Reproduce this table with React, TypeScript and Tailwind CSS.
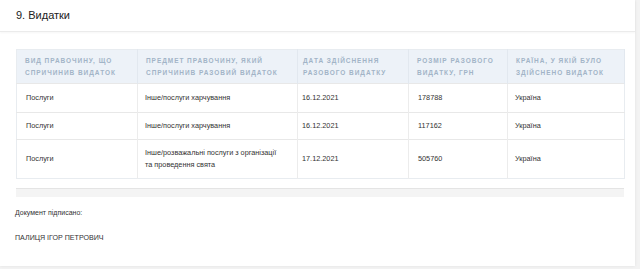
import React from "react";

const rows = [
  { a: "Послуги", b: ["Інше/послуги харчування"], c: "16.12.2021", d: "178788", e: "Україна", h: "h-[29px]" },
  { a: "Послуги", b: ["Інше/послуги харчування"], c: "16.12.2021", d: "117162", e: "Україна", h: "h-[27px]" },
  {
    a: "Послуги",
    b: ["Інше/розважальні послуги з організації", "та проведення свята"],
    c: "17.12.2021",
    d: "505760",
    e: "Україна",
    h: "h-[39px]",
  },
];

export default function App() {
  return (
    <div
      className="w-[640px] h-[269px] bg-[#f3f3f3] overflow-hidden"
      style={{ fontFamily: '"Liberation Sans", Arial, sans-serif' }}
    >
      <div className="w-[635px] h-[266px] bg-white shadow-[0_0_3px_rgba(0,0,0,0.08)] flex flex-col">
        <div className="h-[32px] flex items-center px-4 border-b border-[#ebebeb] shadow-[0_1px_2px_rgba(0,0,0,0.04)] text-[11px] text-[#222]">
          9. Видатки
        </div>
        <div className="pt-[17px] pl-4 pr-[11px]">
          <table className="table-fixed border-collapse w-[608px] border border-[#e8ecf0]">
            <colgroup>
              <col className="w-[121px]" />
              <col className="w-[160px]" />
              <col className="w-[111px]" />
              <col className="w-[99px]" />
              <col className="w-[117px]" />
            </colgroup>
            <thead>
              <tr className="h-[34px] bg-[#edf2f8]">
                {[
                  ["ВИД ПРАВОЧИНУ, ЩО", "СПРИЧИНИВ ВИДАТОК"],
                  ["ПРЕДМЕТ ПРАВОЧИНУ, ЯКИЙ", "СПРИЧИНИВ РАЗОВИЙ ВИДАТОК"],
                  ["ДАТА ЗДІЙСНЕННЯ", "РАЗОВОГО ВИДАТКУ"],
                  ["РОЗМІР РАЗОВОГО", "ВИДАТКУ, ГРН"],
                  ["КРАЇНА, У ЯКІЙ БУЛО", "ЗДІЙСНЕНО ВИДАТОК"],
                ].map((lines, i) => (
                  <th
                    key={i}
                    className={`text-left align-middle font-bold text-[6.5px] leading-[12px] tracking-[0.95px] text-[#a2b4c7] border-r border-[#e2e8ef] ${
                      i === 2 ? "pl-[5px]" : "pl-[8px]"
                    } pr-1`}
                  >
                    {lines.map((l, j) => (
                      <div key={j} className="whitespace-nowrap">{l}</div>
                    ))}
                  </th>
                ))}
              </tr>
            </thead>
            <tbody>
              {rows.map((r, i) => (
                <tr key={i} className={`${r.h} border-t border-[#e8e8e8]`}>
                  <td className="pl-[9px] align-middle text-[7.3px] text-[#333] border-r border-[#ececec]">{r.a}</td>
                  <td className="pl-[7px] align-middle text-[7.3px] leading-[12px] text-[#333] border-r border-[#ececec]">
                    {r.b.map((l, j) => (
                      <div key={j} className="whitespace-nowrap">{l}</div>
                    ))}
                  </td>
                  <td className="pl-[4px] align-middle text-[7.3px] text-[#333] border-r border-[#ececec]">{r.c}</td>
                  <td className="pl-[9px] align-middle text-[7.3px] text-[#333] border-r border-[#ececec]">{r.d}</td>
                  <td className="pl-[7px] align-middle text-[7.3px] text-[#333]">{r.e}</td>
                </tr>
              ))}
            </tbody>
          </table>
          <div className="mt-[9px] w-[608px] h-[9px] bg-[#f4f4f4] border-t border-[#e4e4e4]" />
        </div>
        <div className="pl-[15px] mt-[11px] text-[7px] leading-[10px] text-[#333]">Документ підписано:</div>
        <div className="pl-[15px] mt-[15px] text-[7.1px] leading-[10px] text-[#333]">ПАЛИЦЯ ІГОР ПЕТРОВИЧ</div>
      </div>
    </div>
  );
}
